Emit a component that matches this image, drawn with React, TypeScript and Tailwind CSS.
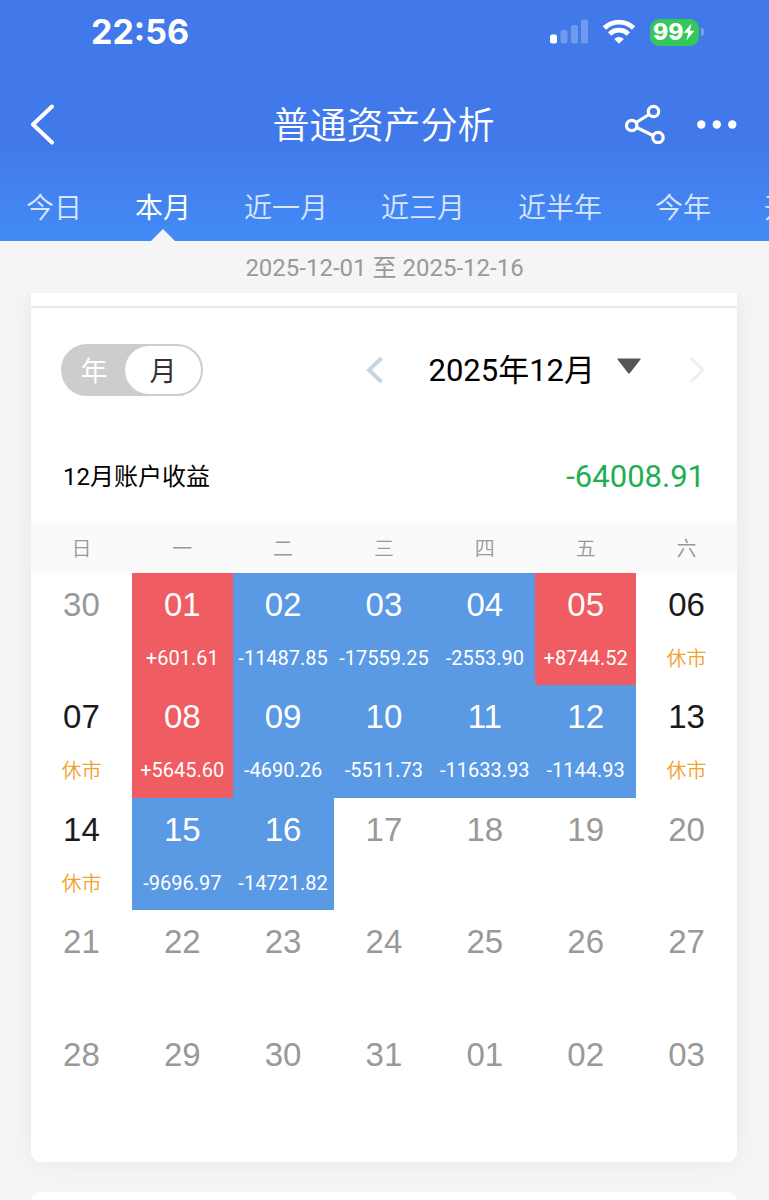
import { useState } from "react";

type Day = {
  day: string;
  value?: string;
  outside?: boolean;
  closed?: boolean;
};

const tabs = ["今日", "本月", "近一月", "近三月", "近半年", "今年", "开户以来"];

const weekdays = ["日", "一", "二", "三", "四", "五", "六"];

const weeks: Day[][] = [
  [
    { day: "30", outside: true },
    { day: "01", value: "+601.61" },
    { day: "02", value: "-11487.85" },
    { day: "03", value: "-17559.25" },
    { day: "04", value: "-2553.90" },
    { day: "05", value: "+8744.52" },
    { day: "06", closed: true },
  ],
  [
    { day: "07", closed: true },
    { day: "08", value: "+5645.60" },
    { day: "09", value: "-4690.26" },
    { day: "10", value: "-5511.73" },
    { day: "11", value: "-11633.93" },
    { day: "12", value: "-1144.93" },
    { day: "13", closed: true },
  ],
  [
    { day: "14", closed: true },
    { day: "15", value: "-9696.97" },
    { day: "16", value: "-14721.82" },
    { day: "17", outside: true },
    { day: "18", outside: true },
    { day: "19", outside: true },
    { day: "20", outside: true },
  ],
  ["21", "22", "23", "24", "25", "26", "27"].map((day) => ({ day, outside: true })),
  ["28", "29", "30", "31", "01", "02", "03"].map((day) => ({ day, outside: true })),
];

function StatusBar() {
  return (
    <div className="flex h-16 items-center justify-between pr-[65px] pl-[91px]">
      <span className="font-['Inter'] text-[34px] leading-10 font-bold">22:56</span>
      <div className="flex items-center gap-[14px]">
        <svg viewBox="0 0 39 26" className="h-[26px] w-[39px]" fill="#fff">
          <rect x="1" y="15.5" width="7" height="9" rx="2" />
          <rect x="11.5" y="11" width="7" height="13.5" rx="2" opacity="0.25" />
          <rect x="22" y="6" width="7" height="18.5" rx="2" opacity="0.25" />
          <rect x="32" y="0.5" width="7" height="24" rx="2" opacity="0.25" />
        </svg>
        <svg viewBox="0 0 34 26" className="h-[26px] w-[34px]" fill="none" stroke="#fff" strokeWidth="4.8">
          <path d="M2.4 9C10.5 1.2 23.5 1.2 31.6 9" />
          <path d="M7.6 15C13 9.9 21 9.9 26.4 15" />
          <path d="M12.2 20C15 17.2 19 17.2 21.8 20L17 24.8Z" fill="#fff" stroke="none" />
        </svg>
        <div className="flex items-center gap-0.5">
          <div className="flex h-[27px] w-[49px] items-center rounded-[9px] bg-[#34c759] pl-[3px]">
            <span className="font-['Inter'] text-[23px] leading-6 font-extrabold">99</span>
            <svg viewBox="0 0 12 18" className="h-[18px] w-3" fill="#fff">
              <path d="M8.6 0.5L0.6 9.8H5.2L3.4 17.5L11.4 7.8H6.8Z" />
            </svg>
          </div>
          <span className="h-2 w-[3px] rounded-r bg-white/30" />
        </div>
      </div>
    </div>
  );
}

function TitleBar() {
  return (
    <div className="grid h-[120px] grid-cols-[1fr_auto_1fr] items-center pr-8 pl-[30px]">
      <button aria-label="返回" className="justify-self-start">
        <svg viewBox="0 0 24 42" className="h-[42px] w-6" fill="none" stroke="#fff" strokeWidth="4" strokeLinecap="round" strokeLinejoin="round">
          <path d="M22 3.5L3 21.5L22 39.5" />
        </svg>
      </button>
      <h1 className="pt-1.5 text-[37px] leading-[48px] font-[350]">普通资产分析</h1>
      <div className="flex items-center gap-8 justify-self-end">
        <button aria-label="分享">
          <svg viewBox="0 0 40 40" className="size-10" fill="none" stroke="#fff" strokeWidth="3.2">
            <circle cx="28.5" cy="7.5" r="5.2" />
            <circle cx="6.7" cy="21.5" r="5.2" />
            <circle cx="33" cy="33.5" r="5.2" />
            <path d="M11.2 18.5L24 10.5M11.7 23.5L28 31.5" />
          </svg>
        </button>
        <button aria-label="更多">
          <svg viewBox="0 0 40 10" className="h-2.5 w-10" fill="#fff">
            <circle cx="4.3" cy="5.5" r="4.2" />
            <circle cx="19.8" cy="5.5" r="4.2" />
            <circle cx="35.3" cy="5.5" r="4.2" />
          </svg>
        </button>
      </div>
    </div>
  );
}

function DayCell({ item }: { item: Day }) {
  const gain = item.value?.startsWith("+");
  const bg = item.value ? (gain ? "bg-[#ef5c62] text-white" : "bg-[#5a99e4] text-white") : "";
  const color = item.outside ? "text-[#999]" : item.value ? "" : "text-[#1a1a1a]";

  return (
    <td className={`p-0 pt-3 text-center align-top ${bg} ${color}`}>
      <div className="font-['Liberation_Sans'] text-[33px] leading-10">{item.day}</div>
      {item.value && <div className="mt-5 text-[20px] leading-[26px]">{item.value}</div>}
      {item.closed && <div className="mt-5 text-[20px] leading-7 font-[350] text-[#f0a32f]">休市</div>}
    </td>
  );
}

export default function App() {
  const [tab, setTab] = useState("本月");
  const [mode, setMode] = useState("月");

  return (
    <div className="min-h-screen overflow-hidden bg-[#f5f5f5] font-['Roboto','Noto_Sans_CJK_SC',sans-serif]">
      <header className="bg-linear-to-b from-[#4279ea] from-60% to-[#428bf7] text-white">
        <StatusBar />
        <TitleBar />
        <nav className="flex h-[57px] gap-[53px] overflow-hidden pl-[26px]">
          {tabs.map((name) => (
            <button
              key={name}
              onClick={() => setTab(name)}
              className={`relative flex shrink-0 items-start text-[28px] leading-[50px] whitespace-nowrap ${
                tab === name ? "text-white" : "font-[350] text-white/80"
              }`}
            >
              {name}
              {tab === name && (
                <svg viewBox="0 0 24 12" className="absolute bottom-0 left-1/2 h-3 w-6 -translate-x-1/2" fill="#f5f5f5">
                  <path d="M0 12L12 0L24 12Z" />
                </svg>
              )}
            </button>
          ))}
        </nav>
      </header>

      <p className="relative z-10 h-[52px] bg-[#f5f5f5] text-center text-[24px] leading-[54px] text-[#999]">
        2025-12-01 至 2025-12-16
      </p>

      <main className="pr-8 pl-[31px]">
        <section className="rounded-b-[10px] bg-white pb-[27px] shadow-[0_0_30px_rgba(0,0,0,0.06)]">
          <div className="h-[15px] border-b-2 border-[#e8e8e8]" />

          <div className="flex h-[124px] items-center justify-between pr-[31px] pl-[30px]">
            <div className="flex h-[52px] w-[142px] rounded-full border-2 border-[#cdcdcd] bg-[#cdcdcd] text-[27px] leading-none">
              {["年", "月"].map((m) => (
                <button
                  key={m}
                  onClick={() => setMode(m)}
                  className={mode === m ? "w-[76px] rounded-full bg-white pt-1 text-[#333]" : "w-[62px] pt-1 text-white"}
                >
                  {m}
                </button>
              ))}
            </div>

            <div className="flex items-center">
              <button aria-label="上个月">
                <svg viewBox="0 0 18 28" className="h-7 w-[18px]" fill="none" stroke="#c8d5e2" strokeWidth="4">
                  <path d="M15.5 2L3 14L15.5 26" />
                </svg>
              </button>
              <button className="ml-11 flex items-center gap-[22px] text-[31px] leading-10 text-black">
                <span className="pt-0.5">2025年12月</span>
                <svg viewBox="0 0 24 16" className="mb-2 h-4 w-6" fill="#555">
                  <path d="M1 0.5H23Q24 0.5 23.4 1.6L13 15Q12 16 11 15L0.6 1.6Q0 0.5 1 0.5Z" />
                </svg>
              </button>
              <button aria-label="下个月" className="ml-[47px]">
                <svg viewBox="0 0 18 28" className="h-7 w-[18px]" fill="none" stroke="#eee" strokeWidth="3">
                  <path d="M2.5 2L15 14L2.5 26" />
                </svg>
              </button>
            </div>
          </div>

          <div className="flex h-[89px] items-center justify-between pr-8 pl-8">
            <h2 className="text-[24px] leading-8 text-black">12月账户收益</h2>
            <span className="text-[31px] leading-8 text-[#1fae54]">-64008.91</span>
          </div>

          <table className="w-full table-fixed border-collapse">
            <thead className="bg-[#fafafa]">
              <tr className="h-[52px]">
                {weekdays.map((d) => (
                  <th key={d} className="p-0 pt-1 text-[20px] leading-7 font-[350] text-[#999]">
                    {d}
                  </th>
                ))}
              </tr>
            </thead>
            <tbody>
              {weeks.map((week, i) => (
                <tr key={i} className="h-[112px] even:h-[113px]">
                  {week.map((item) => (
                    <DayCell key={item.day} item={item} />
                  ))}
                </tr>
              ))}
            </tbody>
          </table>
        </section>

        <section className="mt-[30px] h-10 rounded-[10px] bg-white" />
      </main>
    </div>
  );
}
